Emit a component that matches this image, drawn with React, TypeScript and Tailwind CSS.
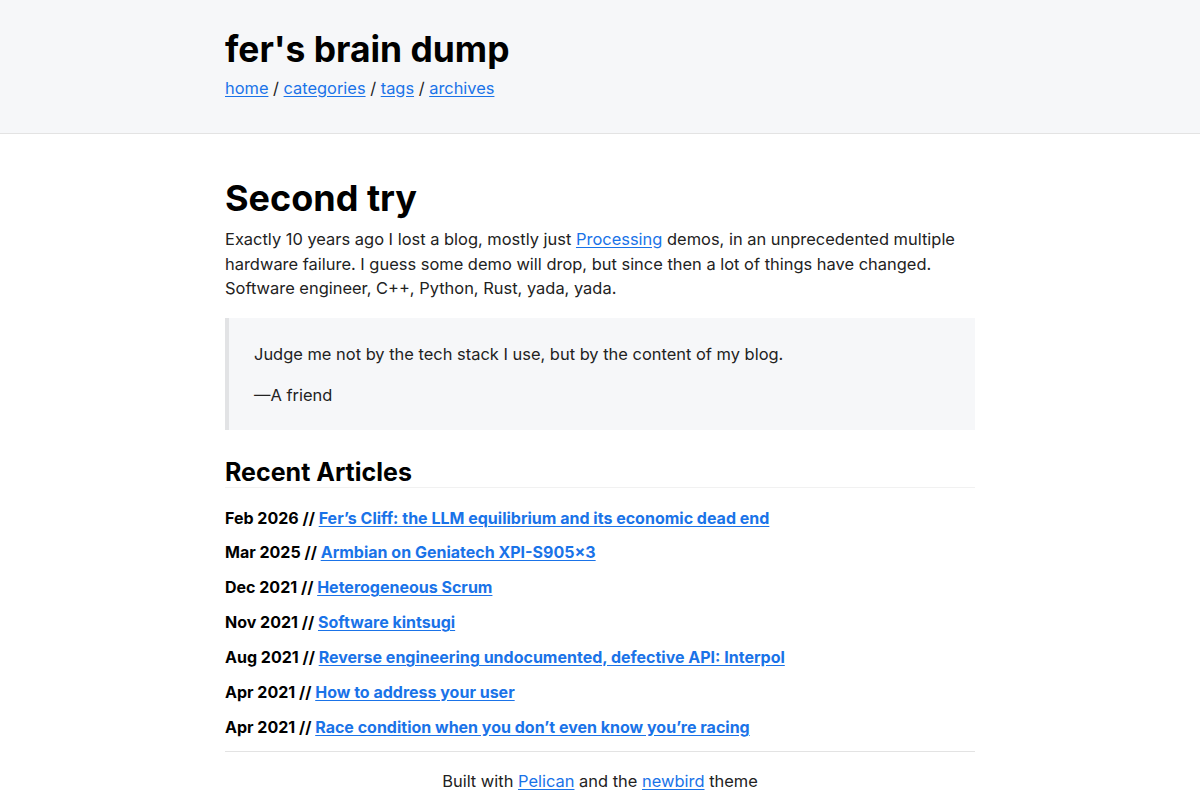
const NAV = ['home', 'categories', 'tags', 'archives'];

const ARTICLES = [
  { date: 'Feb 2026', title: 'Fer’s Cliff: the LLM equilibrium and its economic dead end' },
  { date: 'Mar 2025', title: 'Armbian on Geniatech XPI-S905×3' },
  { date: 'Dec 2021', title: 'Heterogeneous Scrum' },
  { date: 'Nov 2021', title: 'Software kintsugi' },
  { date: 'Aug 2021', title: 'Reverse engineering undocumented, defective API: Interpol' },
  { date: 'Apr 2021', title: 'How to address your user' },
  { date: 'Apr 2021', title: 'Race condition when you don’t even know you’re racing' },
];

const link = 'text-[#1a73e8] underline underline-offset-2';

export default function App() {
  return (
    <div className="min-h-screen bg-white text-[#222] font-['Inter','Liberation_Sans',sans-serif]">
      {/* Header */}
      <header className="bg-[#f6f7f9] border-b border-[#e3e3e3] h-[134px]">
        <div className="w-[750px] mx-auto pt-[28px]">
          <h1 className="text-[35.4px] leading-[44px] font-bold text-black">fer's brain dump</h1>
          <nav className="text-[16.4px] leading-[24px] mt-[4px]">
            {NAV.map((n, i) => (
              <span key={n}>
                {i > 0 && ' / '}
                <a href="#" className={link}>
                  {n}
                </a>
              </span>
            ))}
          </nav>
        </div>
      </header>

      <main className="w-[750px] mx-auto">
        <h2 className="text-[36px] leading-[44px] font-bold text-black mt-[42px]">Second try</h2>
        <p className="text-[16.45px] leading-[24.5px] mt-[7px]">
          Exactly 10 years ago I lost a blog, mostly just{' '}
          <a href="#" className={link}>
            Processing
          </a>{' '}
          demos, in an unprecedented multiple hardware failure. I guess some demo will drop, but since then a lot
          of things have changed. Software engineer, C++, Python, Rust, yada, yada.
        </p>

        <blockquote className="mt-[17px] bg-[#f6f7f9] border-l-[4px] border-[#e2e3e5] pl-[25px] pr-6 pt-[24px] pb-[23px] text-[16.45px] leading-[24px]">
          <p>Judge me not by the tech stack I use, but by the content of my blog.</p>
          <p className="mt-[17px]">—A friend</p>
        </blockquote>

        <h3 className="text-[25px] leading-[30px] font-bold text-black mt-[27px] border-b border-[#f1f1f1]">
          Recent Articles
        </h3>

        <ul className="mt-[18px] flex flex-col gap-[10.9px]">
          {ARTICLES.map((a, i) => (
            <li key={i} className="text-[16px] leading-[24px] font-bold text-black">
              {a.date} //{' '}
              <a href="#" className={link}>
                {a.title}
              </a>
            </li>
          ))}
        </ul>

        <footer className="mt-[12px] border-t border-[#e3e3e3] pt-[17px] text-center text-[16.45px] leading-[24px]">
          Built with{' '}
          <a href="#" className={link}>
            Pelican
          </a>{' '}
          and the{' '}
          <a href="#" className={link}>
            newbird
          </a>{' '}
          theme
        </footer>
      </main>
    </div>
  );
}
